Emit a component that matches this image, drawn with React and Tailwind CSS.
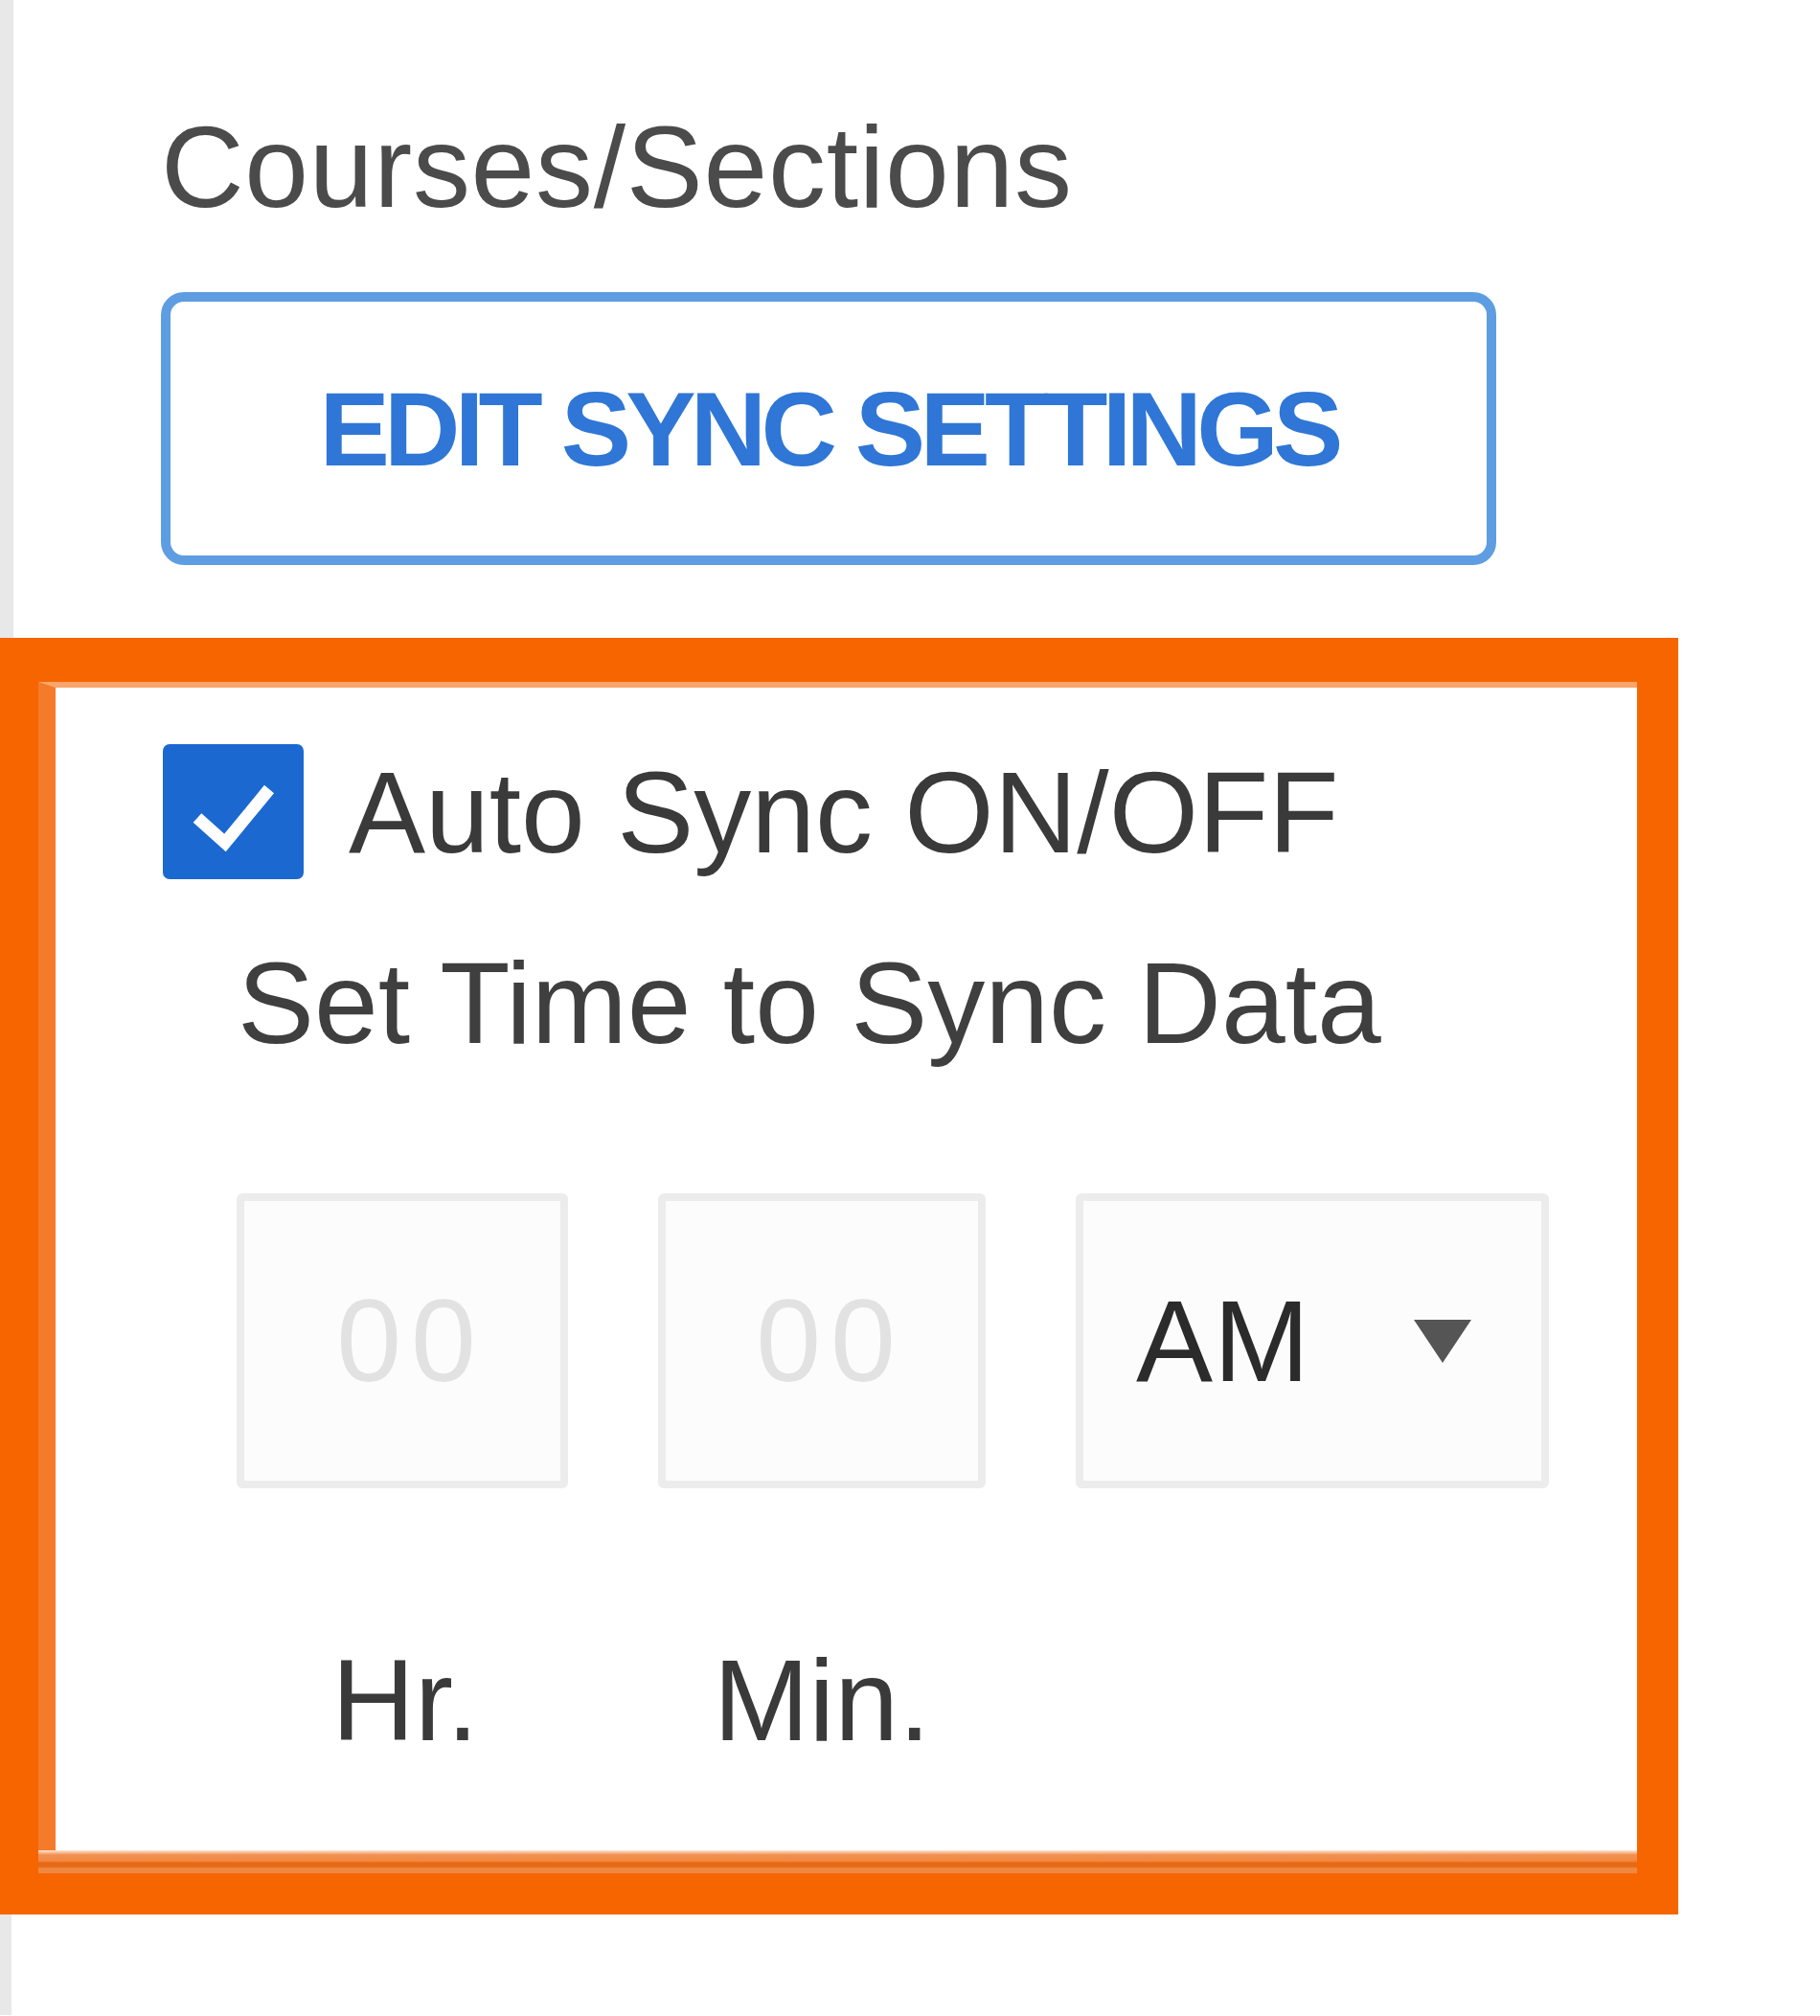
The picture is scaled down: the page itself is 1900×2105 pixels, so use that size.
import React from "react";

// Réglages de synchro — panneau encadré en orange
const FONT = "font-['Liberation_Sans',Arial,sans-serif]";

function CheckBox() {
  return (
    <div className="flex h-[141px] w-[147px] shrink-0 items-center justify-center rounded-[7px] bg-[#1b69d0]">
      <svg width="147" height="141" viewBox="0 0 147 141">
        <polyline
          points="36,77 65,103 111,47"
          fill="none"
          stroke="#ffffff"
          strokeWidth="13"
          strokeLinejoin="miter"
        />
      </svg>
    </div>
  );
}

function TimeBox({ width, children, className = "" }) {
  return (
    <div
      className={`flex h-[308px] shrink-0 items-center rounded-[6px] border-[8px] border-[#ececec] bg-[#fcfcfc] ${width} ${className}`}
    >
      {children}
    </div>
  );
}

export default function App() {
  return (
    <div className={`min-h-[2105px] w-[1900px] bg-white ${FONT}`}>
      {/* haut : titre + bouton */}
      <section className="h-[666px] border-l-[14px] border-[#e8e8e8] pl-[154px] pt-[114px]">
        <h2 className="text-[120px] leading-[120px] font-normal tracking-[0.7px] text-[#4b4b4b]">
          Courses/Sections
        </h2>
        <button className="mt-[71px] flex h-[285px] w-[1394px] items-center justify-center rounded-[24px] border-[10px] border-[#5e9de2] bg-white text-[110px] font-bold leading-[110px] tracking-[-5.8px] text-[#2f76d6]">
          EDIT SYNC SETTINGS
        </button>
      </section>

      {/* encadré orange */}
      <div className="w-[1752px] border-[#f76500] border-t-[46px] border-r-[43px] border-b-[43px] border-l-[40px] bg-white">
        <div className="flex flex-col border-l-[18px] border-t-[6px] border-l-[#f37b29] border-t-[#f9a56d]">
          <div className="pl-[112px] pt-[59px] pb-[97px]">
            <div className="flex items-center gap-[47px]">
              <CheckBox />
              <span className="text-[120px] leading-[120px] text-[#3a3a3a]">
                Auto Sync ON/OFF
              </span>
            </div>

            <p className="ml-[78px] mt-[69px] text-[120px] leading-[120px] text-[#3f3f3f]">
              Set Time to Sync Data
            </p>

            <div className="ml-[77px] mt-[139px] flex gap-[94px]">
              <TimeBox width="w-[346px]" className="justify-center pl-[18px]">
                <span className="text-[122px] leading-none tracking-[10px] text-[#e2e2e2]">00</span>
              </TimeBox>
              <TimeBox width="w-[342px]" className="justify-center pl-[18px]">
                <span className="text-[122px] leading-none tracking-[10px] text-[#e2e2e2]">00</span>
              </TimeBox>
              <TimeBox width="w-[494px]" className="justify-between pl-[55px] pr-[73px]">
                <span className="text-[120px] leading-none tracking-[1px] text-[#2b2b2b]">AM</span>
                <svg width="60" height="45" viewBox="0 0 60 45">
                  <polygon points="0,0 60,0 30,45" fill="#555555" />
                </svg>
              </TimeBox>
            </div>

            <div className="ml-[77px] mt-[161px] flex gap-[94px]">
              <span className="w-[346px] pl-[6px] text-center text-[120px] leading-[120px] text-[#3a3a3a]">
                Hr.
              </span>
              <span className="w-[342px] text-center text-[120px] leading-[120px] text-[#3a3a3a]">
                Min.
              </span>
            </div>
          </div>
          <div className="-ml-[18px] h-[24px] bg-[linear-gradient(to_bottom,#fde6d6,#f2904f_20%,#f08a45_45%,#e86915_55%,#e86915_72%,#f08840_78%,#f08840)]" />
        </div>
      </div>

      <div className="h-[105px] border-l-[12px] border-[#e8e8e8]" />
    </div>
  );
}
